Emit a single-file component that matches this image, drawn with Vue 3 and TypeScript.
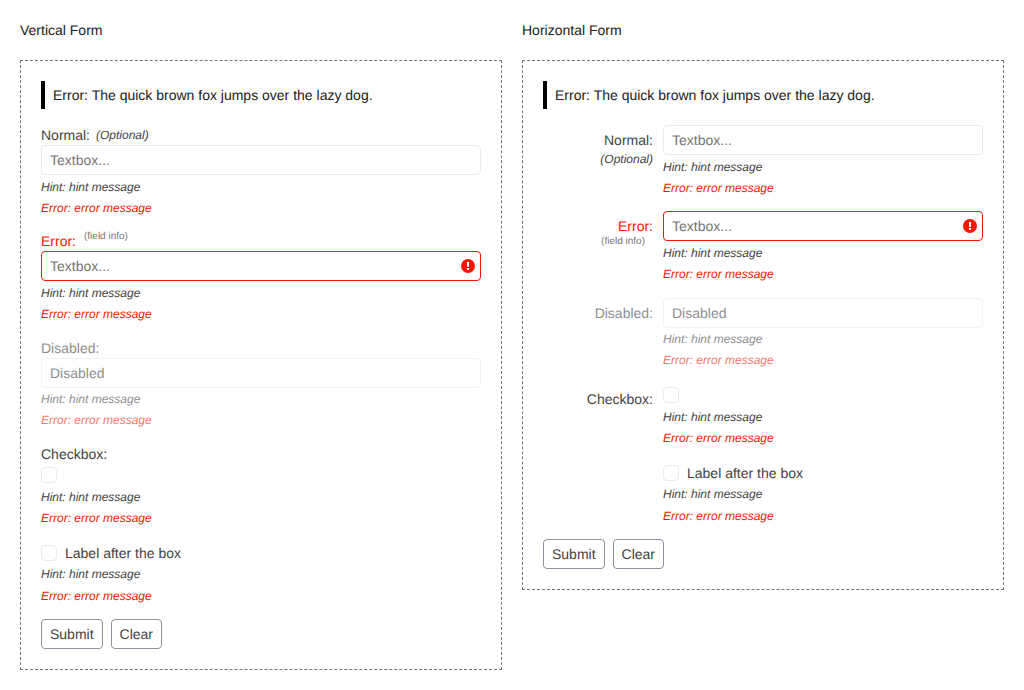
<template>
  <div class="page">
    <section v-for="form in forms" :key="form.title">
      <h2 class="title">{{ form.title }}</h2>
      <form class="form" :class="form.layout" @submit.prevent>
        <div class="alert">Error: The quick brown fox jumps over the lazy dog.</div>

        <div
          v-for="field in fields"
          :key="field.id"
          class="row"
          :class="{ disabled: field.disabled, invalid: field.invalid }"
        >
          <div class="label-col" :class="{ blank: !field.label }">
            <label v-if="field.label" class="label">{{ field.label }}</label>
            <em v-if="field.optional" class="optional">(Optional)</em>
            <small v-if="field.info" class="info">(field info)</small>
          </div>
          <div class="control-col">
            <div v-if="field.type === 'text'" class="input-wrap">
              <input
                class="input"
                type="text"
                placeholder="Textbox..."
                :value="field.disabled ? 'Disabled' : ''"
                :disabled="field.disabled"
              />
              <svg v-if="field.invalid" class="error-icon" viewBox="0 0 14 14" aria-hidden="true">
                <circle cx="7" cy="7" r="7" fill="#f31700" />
                <rect x="6" y="3" width="2" height="5" fill="#fff" />
                <rect x="6" y="9" width="2" height="2" fill="#fff" />
              </svg>
            </div>
            <label v-else class="check">
              <input class="box" type="checkbox" />
              <span v-if="field.after" class="after">{{ field.after }}</span>
            </label>
            <p class="hint">Hint: hint message</p>
            <p class="error">Error: error message</p>
          </div>
        </div>

        <div class="buttons">
          <button type="submit" class="btn">Submit</button>
          <button type="button" class="btn">Clear</button>
        </div>
      </form>
    </section>
  </div>
</template>

<script setup lang="ts">
interface Field {
  id: string
  type: 'text' | 'checkbox'
  label?: string
  optional?: boolean
  info?: boolean
  disabled?: boolean
  invalid?: boolean
  after?: string
}

const forms = [
  { title: 'Vertical Form', layout: 'vertical' },
  { title: 'Horizontal Form', layout: 'horizontal' }
]

const fields: Field[] = [
  { id: 'normal', type: 'text', label: 'Normal:', optional: true },
  { id: 'error', type: 'text', label: 'Error:', info: true, invalid: true },
  { id: 'disabled', type: 'text', label: 'Disabled:', disabled: true },
  { id: 'checkbox', type: 'checkbox', label: 'Checkbox:' },
  { id: 'after', type: 'checkbox', after: 'Label after the box' }
]
</script>

<style>
body {
  background: #fff;
}
</style>

<style scoped>
.page {
  display: grid;
  grid-template-columns: 1fr 1fr;
  gap: 20px;
  padding: 20px 20px 0;
  align-items: start;
  font-family: "Liberation Sans", Arial, sans-serif;
  font-size: 14px;
  color: #424242;
  text-rendering: geometricPrecision;
}

.title {
  margin: 0 0 20px;
  height: 20px;
  font-size: 14px;
  font-weight: 400;
  line-height: 20px;
  color: #212121;
}

.form {
  border: 1px dashed #757575;
  padding: 20px;
}

.alert {
  height: 28px;
  margin-bottom: 16px;
  padding-left: 8px;
  border-left: 4px solid #000;
  line-height: 28px;
  color: #212121;
}

.row {
  margin-bottom: 14.5px;
}

.label {
  line-height: 20px;
}

.vertical .label-col {
  display: flex;
  height: 20px;
  align-items: flex-start;
}

.vertical .label-col.blank {
  display: none;
}

.vertical .optional {
  margin-left: 6px;
  font-size: 12px;
  line-height: 20px;
}

.vertical .info {
  margin: 1px 0 0 8px;
  font-size: 10px;
  line-height: 10px;
  color: #757575;
}

.horizontal .row {
  display: flex;
  gap: 10px;
}

.horizontal .label-col {
  display: flex;
  flex-direction: column;
  flex: 0 0 110px;
  padding-top: 5px;
  text-align: right;
}

.horizontal .optional {
  font-size: 12px;
  line-height: 18px;
}

.horizontal .info {
  margin-right: 8px;
  font-size: 10px;
  line-height: 12px;
  color: #757575;
}

.control-col {
  flex: 1;
  min-width: 0;
}

.input-wrap {
  position: relative;
}

.input {
  display: block;
  box-sizing: border-box;
  width: 100%;
  height: 30px;
  padding: 0 8px;
  border: 1px solid #ebebeb;
  border-radius: 4px;
  background: #fff;
  font: inherit;
  text-rendering: inherit;
  color: #424242;
  outline: none;
}

.input::placeholder {
  color: #757575;
  opacity: 1;
}

.invalid .input {
  border-color: #f31700;
}

.invalid .label {
  color: #f31700;
}

.error-icon {
  position: absolute;
  top: 8px;
  right: 6px;
  width: 14px;
  height: 14px;
}

.check {
  display: flex;
  height: 21.3px;
  align-items: flex-start;
  line-height: 24px;
}

.box {
  appearance: none;
  box-sizing: border-box;
  flex: none;
  width: 16px;
  height: 16px;
  margin: 3.2px 0 0;
  border: 1px solid #ebebeb;
  border-radius: 4px;
  background: #fff;
}

.after {
  margin-left: 8px;
}

.hint,
.error {
  margin: 2.6px 0 0;
  font-size: 12px;
  font-style: italic;
  line-height: 18px;
}

.error {
  margin-top: 3.2px;
  color: #f31700;
}

.disabled .label,
.disabled .hint,
.disabled .error,
.disabled .input {
  opacity: 0.6;
}

.buttons {
  display: flex;
  gap: 8px;
}

.btn {
  box-sizing: border-box;
  height: 30px;
  padding: 0 8px;
  border: 1px solid #8f8f9d;
  border-radius: 4px;
  background: #fff;
  font: inherit;
  text-rendering: inherit;
  color: #424242;
}
</style>
